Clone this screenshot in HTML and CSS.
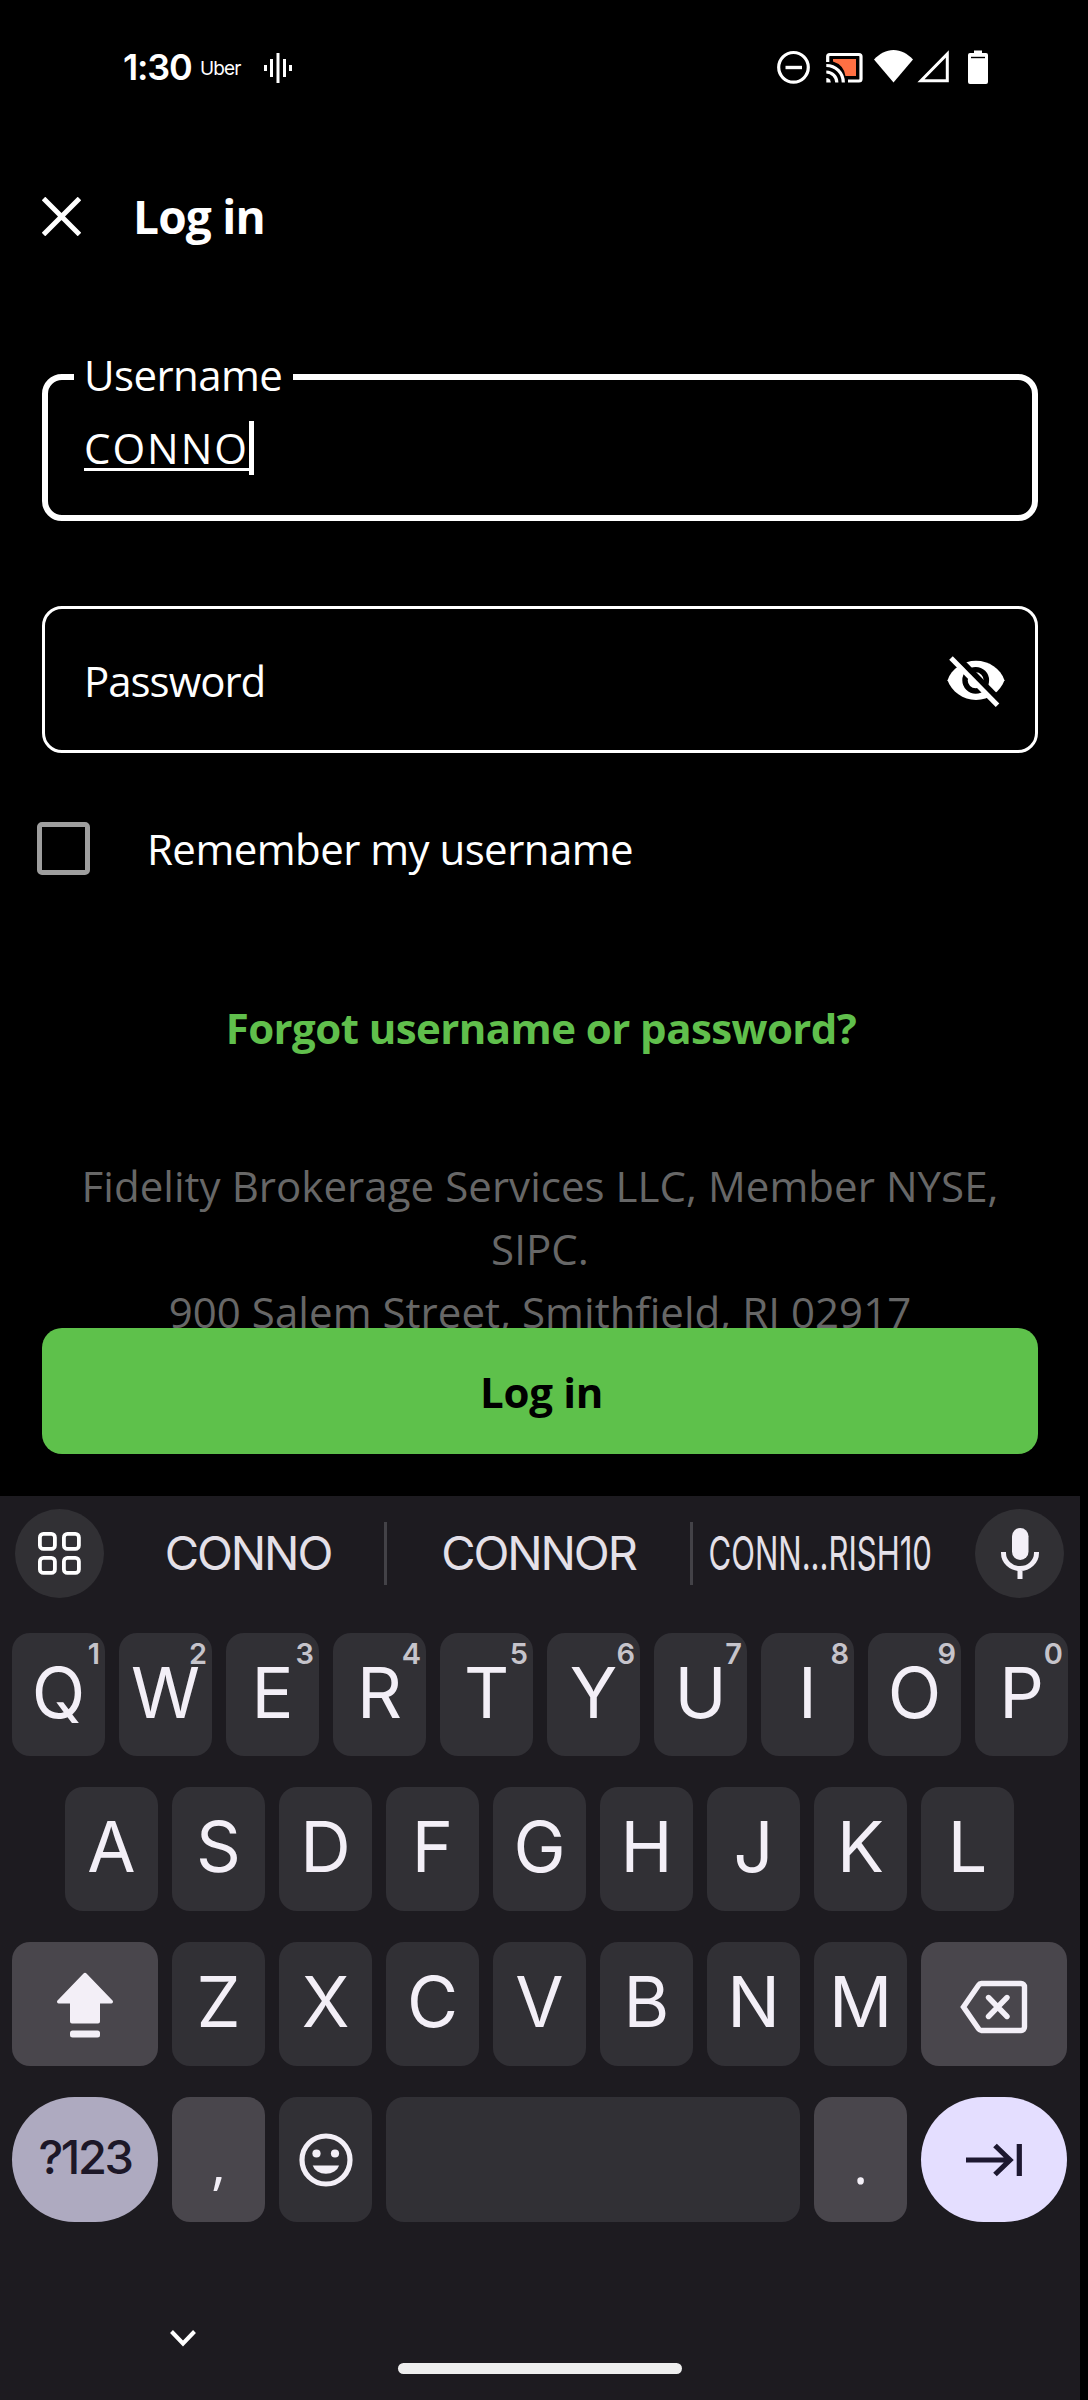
FILE: index.html
```html
<!DOCTYPE html>
<html lang="en">
<head>
<meta charset="utf-8">
<title>Log in</title>
<link rel="stylesheet" href="styles.css">
</head>
<body>
<div class="screen">
  <header class="status">
    <span class="clock">1:30</span>
    <span class="carrier">Uber</span>
    <svg class="wave" width="28" height="30" viewBox="0 0 28 30" fill="#fff"><rect x="0" y="12" width="3" height="6"/><rect x="6" y="6" width="3" height="18"/><rect x="12.5" y="0" width="3" height="30"/><rect x="19" y="6" width="3" height="18"/><rect x="25" y="12" width="3" height="6"/></svg>
    <svg class="tray" width="214" height="36" viewBox="775 49 214 36">
      <circle cx="793.5" cy="67.3" r="14.8" fill="none" stroke="#fff" stroke-width="3.2"/>
      <path d="M785.5 67.5h16.5" stroke="#fff" stroke-width="3.4"/>
      <path d="M833 59h23v17h-10.500a18 18 0 0 0-12.500-14.500z" fill="#ff7043"/>
      <path d="M827.7 62v-5.500a2 2 0 0 1 2-2H859a2 2 0 0 1 2 2V79a2 2 0 0 1-2 2H848" fill="none" stroke="#fff" stroke-width="3.200"/>
      <path d="M826.300 65.500a17 17 0 0 1 17 17M826.300 72a10.500 10.500 0 0 1 10.500 10.500" fill="none" stroke="#fff" stroke-width="3.200"/>
      <path d="M826.300 78a4.500 4.500 0 0 1 4.500 4.500h-4.500z" fill="#fff"/>
      <path d="M893.500 82.500L874 59.500C880 53.500 886 50 893.500 50S907 53.500 913 59.500z" fill="#fff"/>
      <path d="M921 80.700H947.300V54z" fill="none" stroke="#fff" stroke-width="3"/>
      <path d="M974 50.500h8v2.500h4a2 2 0 0 1 2 2v27a2 2 0 0 1-2 2h-16a2 2 0 0 1-2-2v-27a2 2 0 0 1 2-2h4z" fill="#fff"/>
      <path d="M971 57.500h14" stroke="#000" stroke-width="1.400"/>
    </svg>
  </header>

  <div class="appbar">
    <svg width="39" height="39" viewBox="0 0 39 39" stroke="#fff" stroke-width="5"><path d="M1.500 1.500l36 36M37.500 1.500l-36 36"/></svg>
    <h1 class="title">Log in</h1>
  </div>

  <main class="form">
    <div class="field focused">
      <label class="legend">Username</label>
      <span class="value">CONNO</span><span class="caret"></span>
    </div>
    <div class="field password">
      <span class="placeholder">Password</span>
      <svg class="eye" width="58" height="52" viewBox="0 0 58 52">
        <path d="M0.500 24.300C4.500 12.500 16 4.700 29 4.700S53.500 12.500 57.500 24.300C53.500 35.500 42 44 29 44S4.500 35.500 0.500 24.300z" fill="#fff"/>
        <circle cx="28.700" cy="24.300" r="10.700" fill="#fff" stroke="#000" stroke-width="5.400"/>
        <path d="M4.700 -4.500L58 49.800" stroke="#000" stroke-width="6"/>
        <path d="M4 2L50.500 49.300" stroke="#fff" stroke-width="5"/>
      </svg>
    </div>
    <div class="remember">
      <span class="checkbox"></span>
      <span class="remember-label">Remember my username</span>
    </div>
    <a class="forgot">Forgot username or password?</a>
    <p class="legal">Fidelity Brokerage Services LLC, Member NYSE,<br>SIPC.<br>900 Salem Street, Smithfield, RI 02917</p>
    <button class="submit">Log in</button>
  </main>

  <section class="keyboard">
    <div class="suggestions">
      <span class="round"><svg width="43" height="43" viewBox="0 0 43 43" fill="none" stroke="#fff" stroke-width="3.800"><rect x="1.900" y="1.900" width="15" height="15" rx="3.500"/><rect x="25.900" y="1.900" width="15" height="15" rx="3.500"/><rect x="1.900" y="25.900" width="15" height="15" rx="3.500"/><rect x="25.900" y="25.900" width="15" height="15" rx="3.500"/></svg></span>
      <span class="word first">CONNO</span>
      <span class="divider"></span>
      <span class="word second">CONNOR</span>
      <span class="divider"></span>
      <span class="word third"><span class="squeeze">CONN...RISH10</span></span>
      <span class="round"><svg width="38" height="51" viewBox="0 0 38 51"><rect x="11" y="0" width="16.500" height="32" rx="8.250" fill="#f3eff7"/><path d="M2.500 24v1a16.500 15.500 0 0 0 33 0v-1M19 41v10" fill="none" stroke="#f3eff7" stroke-width="5"/></svg></span>
    </div>
    <div class="row r1">
      <span class="key">Q<sup>1</sup></span><span class="key">W<sup>2</sup></span><span class="key">E<sup>3</sup></span><span class="key">R<sup>4</sup></span><span class="key">T<sup>5</sup></span><span class="key">Y<sup>6</sup></span><span class="key">U<sup>7</sup></span><span class="key">I<sup>8</sup></span><span class="key">O<sup>9</sup></span><span class="key">P<sup>0</sup></span>
    </div>
    <div class="row r2">
      <span class="key">A</span><span class="key">S</span><span class="key">D</span><span class="key">F</span><span class="key">G</span><span class="key">H</span><span class="key">J</span><span class="key">K</span><span class="key">L</span>
    </div>
    <div class="row r3">
      <span class="key wide mod"><svg class="shift" width="58" height="66" viewBox="0 0 58 66" fill="#f3eff7"><path d="M27.500 1.500a2 2 0 0 1 3 0L56.500 28.500a1.800 1.800 0 0 1-1.300 3H44V49.500a2 2 0 0 1-2 2H16a2 2 0 0 1-2-2V31.500H2.800a1.800 1.800 0 0 1-1.300-3z"/><rect x="14" y="58.500" width="30" height="7" rx="2.500"/></svg></span>
      <span class="key">Z</span><span class="key">X</span><span class="key">C</span><span class="key">V</span><span class="key">B</span><span class="key">N</span><span class="key">M</span>
      <span class="key wide mod"><svg class="backspace" width="68" height="54" viewBox="0 0 68 54" fill="none" stroke="#f3eff7" stroke-width="5.400"><path d="M21.500 3.500H61a3.500 3.500 0 0 1 3.500 3.500V47a3.500 3.500 0 0 1-3.500 3.500H21.500a4 4 0 0 1-3-1.700L3.500 27 18.500 5.200a4 4 0 0 1 3-1.700z"/><path d="M28.500 17.500l18.500 19M47 17.500l-18.500 19" stroke-linecap="round"/></svg></span>
    </div>
    <div class="row r4">
      <span class="key wide sym">?123</span>
      <span class="key mod punct">,</span>
      <span class="key"><svg width="54" height="54" viewBox="0 0 54 54" fill="#f3eff7"><circle cx="27" cy="27" r="24" fill="none" stroke="#f3eff7" stroke-width="5.200"/><circle cx="17.500" cy="20.500" r="4.100"/><circle cx="36" cy="20.500" r="4.100"/><path d="M13.700 32.500h26.400a13.600 11 0 0 1-26.400 0z"/></svg></span>
      <span class="key space"></span>
      <span class="key mod punct">.</span>
      <span class="key wide enter"><svg width="58" height="34" viewBox="0 0 58 34" fill="none" stroke="#1d1830" stroke-width="5.200"><path d="M1 17H46M30 2.500L45 17 30 31.500M54.300 1V33"/></svg></span>
    </div>
    <div class="navbar">
      <svg width="26" height="17" viewBox="0 0 26 17" fill="none" stroke="#fff" stroke-width="4"><path d="M1.500 1.500L13 13.500 24.500 1.500"/></svg>
      <span class="handle"></span>
    </div>
  </section>
</div>
</body>
</html>
```
FILE: styles.css
```css
* { box-sizing: border-box; }
body { margin: 0; background: #000; }
svg { display: block; flex: none; }

.screen {
  width: 1080px;
  height: 2400px;
  display: flex;
  flex-direction: column;
  background: #000;
  color: #fff;
  font-family: "Open Sans", "Noto Sans", sans-serif;
  font-size: 42px;
  white-space: nowrap;
}

/* status bar */
.status {
  height: 134px;
  display: flex;
  align-items: center;
  padding: 0 91px 0 123px;
  font-family: Inter, sans-serif;
}
.clock { width: 77px; font-size: 36px; font-weight: 600; letter-spacing: -1.2px; }
.carrier { width: 64px; font-size: 19px; padding-top: 2px; letter-spacing: -0.9px; }
.wave { margin-top: 2px; }
.tray { margin-left: auto; }

/* app bar */
.appbar {
  height: 164px;
  display: flex;
  align-items: center;
  padding-left: 42px;
  gap: 52px;
}
.title { margin: 0; font-size: 46px; line-height: 60px; font-weight: 700; letter-spacing: -0.8px; }

/* form */
.form { display: flex; flex-direction: column; padding: 76px 42px 0; }
.field {
  position: relative;
  height: 147px;
  display: flex;
  align-items: center;
  border: 3px solid #fff;
  border-radius: 20px;
  padding: 0 30px 0 39px;
}
.field.focused { border-width: 6px; padding-left: 36px; }
.legend {
  position: absolute;
  left: 26px;
  top: -35px;
  width: 219px;
  padding-left: 10px;
  line-height: 60px;
  letter-spacing: -0.6px;
  background: #000;
}
.value {
  letter-spacing: 2px;
  text-decoration: underline;
  text-decoration-thickness: 3px;
  text-underline-offset: 4px;
}
.caret { width: 5px; height: 54px; background: #fff; }
.password { margin-top: 85px; justify-content: space-between; }
.placeholder { padding-top: 2px; letter-spacing: -1px; }
.eye { margin-top: 5px; }
.remember {
  display: flex;
  align-items: center;
  gap: 57px;
  height: 53px;
  margin: 69px 0 0 -5px;
}
.remember-label { letter-spacing: -0.55px; }
.checkbox { width: 53px; height: 53px; border: 5px solid #9e9e9e; border-radius: 5px; }
.forgot {
  margin-top: 123px;
  line-height: 60px;
  padding-left: 2px;
  text-align: center;
  font-weight: 700;
  letter-spacing: -0.57px;
  color: #60bf4c;
}
.legal {
  margin: 95px 0 0;
  padding-top: 1px;
  height: 175px;
  overflow: hidden;
  text-align: center;
  line-height: 63px;
  letter-spacing: 0.05px;
  color: #676767;
}
.submit {
  height: 126px;
  padding: 2px 0 0 3px;
  border: 0;
  border-radius: 20px;
  background: #5ec14b;
  color: #000;
  font: 700 42px/60px "Open Sans", "Noto Sans", sans-serif;
  letter-spacing: -0.3px;
}

/* keyboard */
.keyboard {
  flex: 1;
  margin-top: 42px;
  display: flex;
  flex-direction: column;
  background: #1d1b20;
  font-family: Inter, Roboto, sans-serif;
  color: #f3eff7;
}
.suggestions {
  height: 115px;
  display: flex;
  align-items: center;
  padding: 0 16px 0 15px;
  font-size: 47px;
  color: #e4e0e8;
}
.round {
  flex: none;
  width: 89px;
  height: 89px;
  border-radius: 50%;
  background: #313034;
  display: flex;
  align-items: center;
  justify-content: center;
}
.word { flex: none; display: flex; justify-content: center; padding-bottom: 3px; letter-spacing: -2.1px; }
.first { width: 280px; padding-left: 8px; }
.second { width: 303px; }
.third { width: 282px; padding-right: 28px; letter-spacing: 0; }
.squeeze { transform: scaleX(0.66); }
.divider { flex: none; width: 3px; height: 63px; background: #434247; }

.row { display: flex; gap: 14px; padding: 0 12px; }
.r1 { height: 123px; margin-top: 22px; }
.r2 { height: 124px; margin-top: 31px; padding: 0 66px 0 65px; }
.r3 { height: 124px; margin-top: 31px; }
.r4 { height: 125px; margin-top: 31px; }
.key {
  position: relative;
  width: 93px;
  display: flex;
  align-items: center;
  justify-content: center;
  padding-bottom: 4px;
  border-radius: 18px;
  background: #313035;
  font-size: 70px;
  line-height: 80px;
}
.key sup {
  position: absolute;
  right: 5px;
  top: 6px;
  font-size: 29px;
  line-height: 30px;
  font-weight: 600;
  color: #c6c4cb;
}
.wide { width: 146px; }
.mod { background: #49464c; }
.shift { margin-top: 6px; }
.backspace { margin-top: 9px; }
.space { width: 414px; }
.r4 .key { padding-bottom: 0; }
.r4 .sym {
  padding-bottom: 5px;
  border-radius: 62.5px;
  background: #aeaac0;
  color: #1d1828;
  font-size: 47px;
  font-weight: 500;
  letter-spacing: -2.4px;
}
.r4 .punct { padding-top: 5px; font-size: 56px; font-family: "Open Sans", sans-serif; }
.enter { border-radius: 62.5px; background: #e4deff; }

.navbar { flex: 1; padding: 108px 0 0 170px; }
.handle {
  display: block;
  width: 284px;
  height: 11px;
  margin: 16px 0 0 228px;
  border-radius: 6px;
  background: #eeeeee;
}
```
